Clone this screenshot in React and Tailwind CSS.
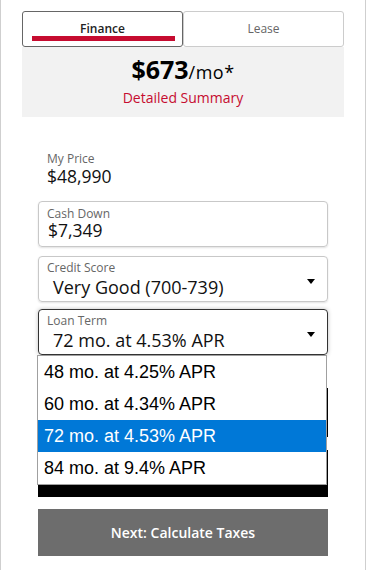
import React, { useState } from "react";

const terms = [
  "48 mo. at 4.25% APR",
  "60 mo. at 4.34% APR",
  "72 mo. at 4.53% APR",
  "84 mo. at 9.4% APR",
];

function Caret() {
  return (
    <svg width="8" height="5" viewBox="0 0 8 5" className="shrink-0">
      <path d="M0 0h8L4 5z" fill="#000" />
    </svg>
  );
}

export default function App() {
  const [tab, setTab] = useState("finance");
  const [term] = useState(terms[2]);

  return (
    <div className="w-[366px] h-[570px] bg-white border-x border-[#cfcfcf] font-['Open_Sans',sans-serif] overflow-hidden">
      {/* Tabs */}
      <div className="ml-[21px] w-[322px] pt-[11px]">
        <div className="flex">
          <button
            onClick={() => setTab("finance")}
            className="w-[161px] h-[36px] border border-[#666] rounded-[3px] bg-white flex flex-col items-center pt-[9px]"
          >
            <span className="text-[12px] leading-[15px] font-semibold text-[#222]">Finance</span>
            <span className="w-[143px] h-[5px] bg-[#c60c30] ml-[1px]" />
          </button>
          <button
            onClick={() => setTab("lease")}
            className="w-[161px] h-[36px] border border-[#ccc] rounded-[3px] bg-white flex flex-col items-center pt-[9px]"
          >
            <span className="text-[12px] leading-[15px] text-[#666]">Lease</span>
          </button>
        </div>

        {/* Payment summary */}
        <div className="h-[70px] bg-[#f2f2f2] flex flex-col items-center pt-[7px]">
          <div className="leading-[30px] text-black">
            <span className="text-[25px] font-bold">$673</span>
            <span className="text-[18px] tracking-[0.5px]">/mo*</span>
          </div>
          <a className="text-[14px] leading-[20px] text-[#c60c30]">Detailed Summary</a>
        </div>
      </div>

      {/* Fields */}
      <div className="ml-[37px] w-[290px] mt-[29px] flex flex-col">
        <div className="h-[46px] border border-transparent px-[8px] pt-[5px]">
          <div className="text-[12px] leading-[14px] text-[#666]">My Price</div>
          <div className="mt-[1px] text-[17.5px] leading-[19px] text-[#111]">$48,990</div>
        </div>

        <div className="mt-[9px] h-[46px] border border-[#c8c8c8] rounded-[4px] shadow-[0_1px_2px_rgba(0,0,0,0.12)] px-[8px] pt-[5px]">
          <div className="text-[12px] leading-[14px] text-[#666]">Cash Down</div>
          <div className="text-[17.5px] leading-[19px] text-[#111] pl-[1px]">$7,349</div>
        </div>

        <div className="mt-[9px] h-[46px] border border-[#c8c8c8] rounded-[4px] shadow-[0_1px_2px_rgba(0,0,0,0.12)] pl-[8px] pr-[12px] pt-[4px] flex items-center">
          <div className="flex-1 self-start">
            <div className="text-[12px] leading-[14px] text-[#666]">Credit Score</div>
            <div className="mt-[2px] text-[18px] leading-[20px] text-[#111] pl-[6px]">Very Good (700-739)</div>
          </div>
          <Caret />
        </div>

        <div className="relative mt-[7px]">
          <div className="h-[46px] border border-[#333] rounded-[4px] shadow-[0_0_4px_rgba(0,0,0,0.25)] pl-[8px] pr-[12px] pt-[4px] flex items-center">
            <div className="flex-1 self-start">
              <div className="text-[12px] leading-[14px] text-[#666]">Loan Term</div>
              <div className="mt-[2px] text-[18px] leading-[20px] text-[#111] pl-[6px]">{term}</div>
            </div>
            <Caret />
          </div>

          {/* Open option list */}
          <ul className="absolute z-10 top-full left-[-1px] w-[290px] border border-[#a0a0a0] bg-white font-['Liberation_Sans',Arial,sans-serif]">
            {terms.map((t) => (
              <li
                key={t}
                className={`h-[32px] px-[6px] flex items-center text-[18px] ${
                  t === term ? "bg-[#0078d7] text-white" : "text-black"
                }`}
              >
                {t}
              </li>
            ))}
          </ul>
        </div>

        <div className="mt-[33px] h-[49px] bg-black" />
        <div className="mt-[13px] h-[47px] bg-black" />

        <button className="mt-[12px] h-[47px] bg-[#6d6d6d] text-white text-[14px] font-semibold">
          Next: Calculate Taxes
        </button>
      </div>
    </div>
  );
}
